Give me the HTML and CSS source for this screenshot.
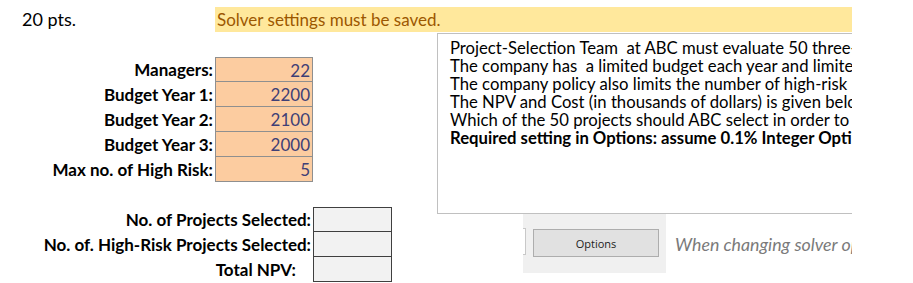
FILE: index.html
```html
<!doctype html>
<html lang="en">
<head>
    <meta charset="UTF-8">
    <title>Project Selection</title>
    <link rel="stylesheet" href="styles.css">
</head>
<body>
<div class="sheet">
    <div class="top-row">
        <div class="points">20 pts.</div>
        <div class="banner">Solver settings must be saved.</div>
    </div>

    <div class="inputs">
        <div class="label">Managers:</div>
        <div class="cell input">22</div>
        <div class="label">Budget Year 1:</div>
        <div class="cell input">2200</div>
        <div class="label">Budget Year 2:</div>
        <div class="cell input">2100</div>
        <div class="label">Budget Year 3:</div>
        <div class="cell input">2000</div>
        <div class="label">Max no. of High Risk:</div>
        <div class="cell input">5</div>
    </div>

    <div class="outputs">
        <div class="label">No. of Projects Selected:</div>
        <div class="cell output"></div>
        <div class="label">No. of. High-Risk Projects Selected:</div>
        <div class="cell output"></div>
        <div class="label indent">Total NPV:</div>
        <div class="cell output"></div>
    </div>

    <!-- floating objects over the grid -->
    <div class="textbox">
        <p>Project-Selection Team&nbsp; at ABC must evaluate 50 three-year projects</p>
        <p>The company has&nbsp; a limited budget each year and limited managers</p>
        <p>The company policy also limits the number of high-risk projects</p>
        <p>The NPV and Cost (in thousands of dollars) is given below</p>
        <p>Which of the 50 projects should ABC select in order to maximize NPV?</p>
        <p class="strong">Required setting in Options: assume 0.1% Integer Optimality</p>
    </div>

    <div class="options-panel">
        <span class="frame-edge"></span>
        <button class="options-btn" type="button">Options</button>
    </div>

    <div class="note">When changing solver options, save the model</div>
</div>
</body>
</html>
```

FILE: styles.css
```css
body {
    margin: 0;
    padding: 0;
    background: #fff;
    font-family: Lato, "Open Sans", sans-serif;
    color: #000;
}

.sheet {
    position: relative;
    width: 852px;
    height: 283px;
    overflow: hidden;
}

.top-row {
    display: flex;
    padding-top: 7px;
    height: 25px;
}

.points {
    width: 193px;
    padding-left: 22px;
    font-size: 18px;
    line-height: 25px;
}

.banner {
    flex: 1;
    background: #ffe89c;
    color: #9c5700;
    font-size: 17px;
    line-height: 25px;
    padding-left: 2px;
}

.inputs {
    display: grid;
    grid-template-columns: 215px 98px;
    grid-auto-rows: 25px;
    margin-top: 25px;
}

.outputs {
    display: grid;
    grid-template-columns: 313px 79px;
    grid-auto-rows: 25px;
    margin-top: 25px;
}

.label {
    font-weight: bold;
    font-size: 17px;
    text-align: right;
    line-height: 26px;
    padding-right: 2px;
}

.label.indent {
    padding-right: 17px;
}

.cell {
    box-sizing: border-box;
    font-size: 17px;
    text-align: right;
    line-height: 25px;
    padding-right: 2px;
}

.cell.input {
    background: #fccca0;
    color: #3f3f76;
    border: 1px solid #8f8f8f;
    border-top-width: 0;
}

.cell.input:nth-child(2) {
    border-top-width: 1px;
}

.cell.output {
    background: #f2f2f2;
    border: 1px solid #3f3f3f;
    border-top-width: 0;
}

.cell.output:nth-child(2) {
    border-top-width: 1px;
}

.textbox {
    position: absolute;
    left: 437px;
    top: 33px;
    width: 440px;
    height: 181px;
    border: 1px solid #c0c0c0;
    padding: 5px 0 0 12px;
    box-sizing: border-box;
    background: #fff;
    font-size: 16.7px;
    line-height: 18px;
    white-space: nowrap;
}

.textbox p {
    margin: 0;
}

.textbox .strong {
    font-weight: bold;
}

.options-panel {
    position: absolute;
    left: 523px;
    top: 214px;
    width: 143px;
    height: 59px;
    background: #f0f0f0;
}

.frame-edge {
    position: absolute;
    left: 0;
    top: 14px;
    width: 2px;
    height: 25px;
    border: 1px solid #c8c8c8;
    border-left: none;
    background: #fff;
}

.options-btn {
    position: absolute;
    left: 10px;
    top: 15px;
    width: 126px;
    height: 28px;
    background: #e1e1e1;
    border: 1px solid #adadad;
    font-family: "Open Sans", sans-serif;
    font-size: 11px;
    color: #222;
    padding: 0;
}

.note {
    position: absolute;
    left: 675px;
    top: 233px;
    font-style: italic;
    font-size: 17.8px;
    color: #7a7a7a;
    white-space: nowrap;
}
```
